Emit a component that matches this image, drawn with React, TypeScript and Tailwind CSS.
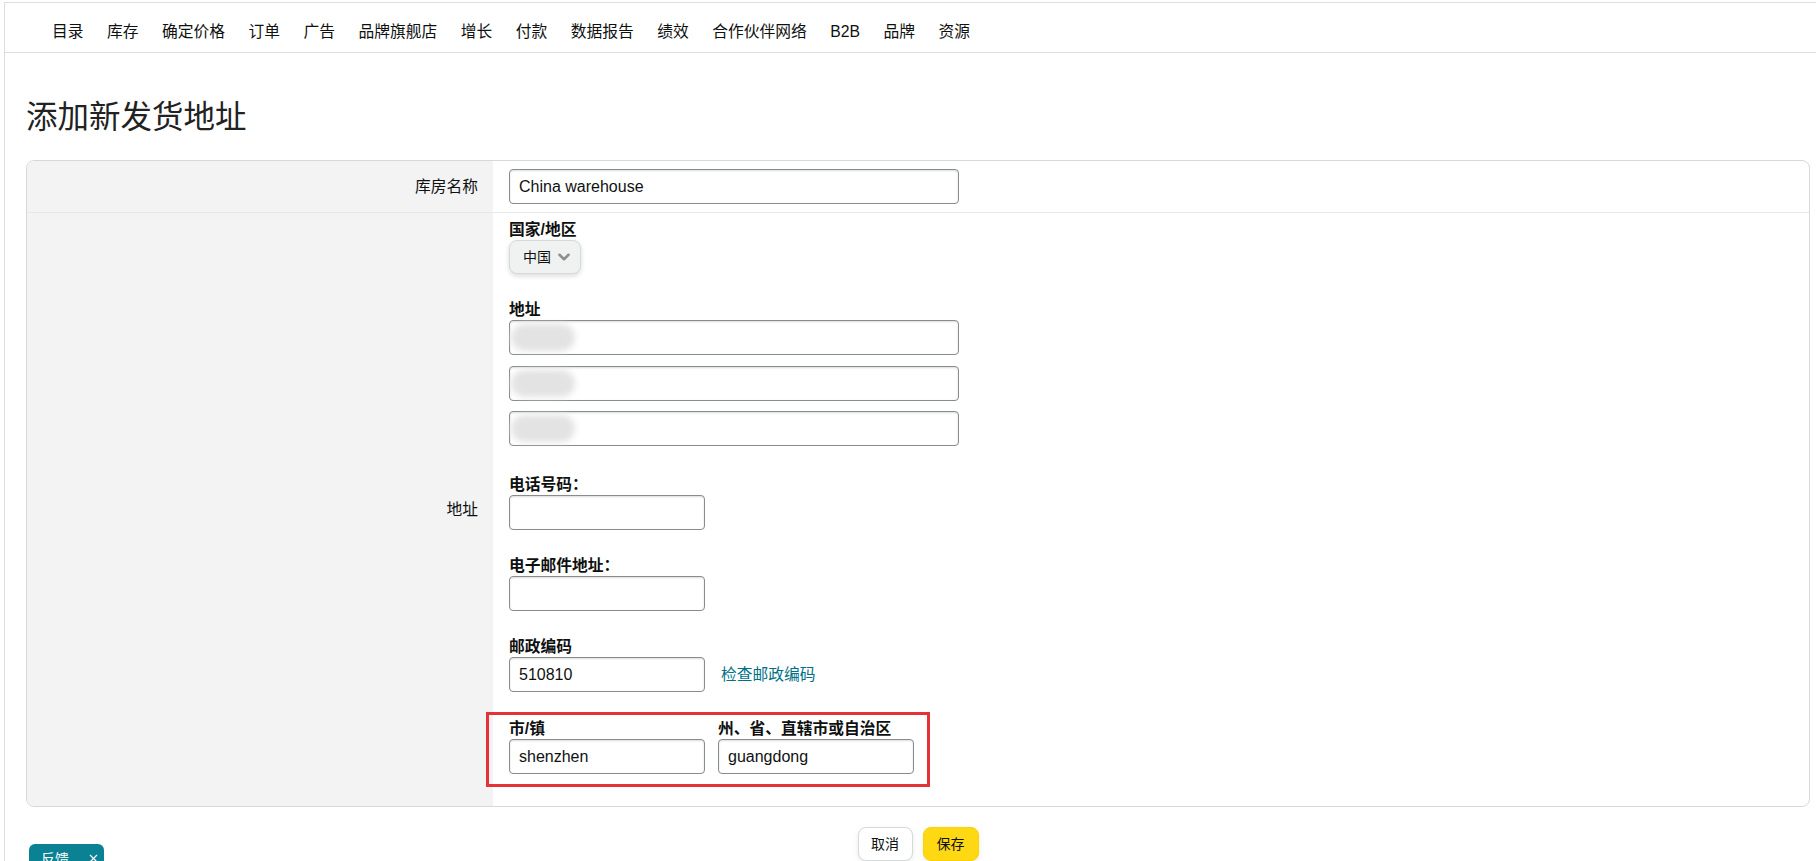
import { ChevronDown, X } from 'lucide-react';

const navItems = ['目录', '库存', '确定价格', '订单', '广告', '品牌旗舰店', '增长', '付款', '数据报告', '绩效', '合作伙伴网络', 'B2B', '品牌', '资源'];

const inputCls =
  'h-[35px] rounded-[4px] border border-[#888c8c] bg-white px-[9px] text-[16px] text-[#0f1111] shadow-[inset_0_1px_2px_rgba(15,17,17,0.15)] outline-none';

function Blur() {
  return (
    <span className="pointer-events-none absolute left-[2px] top-[4px] h-[27px] w-[64px] rounded-full bg-[#e3e3e3] blur-[3px]" />
  );
}

export default function App() {
  return (
    <div className="min-h-screen bg-white pl-[4px] pt-[2px] font-['Liberation_Sans','Noto_Sans_CJK_SC',sans-serif] text-[#0f1111]">
      <div className="min-h-[859px] border-l border-t border-[#dddddd]">
        {/* top nav */}
        <nav className="flex h-[50px] items-center gap-[23.5px] border-b border-[#dddddd] pl-[47px] pt-[8px] text-[15.75px]">
          {navItems.map((item) => (
            <a key={item} className="cursor-pointer whitespace-nowrap">
              {item}
            </a>
          ))}
        </nav>

        <div className="pl-[21px] pr-[6px]">
          <h1 className="mt-[44px] text-[31.5px] font-normal leading-[40px] text-[#222]">添加新发货地址</h1>

          <div className="mt-[23px] overflow-hidden rounded-[8px] border border-[#d5d9d9]">
            {/* warehouse name */}
            <div className="flex border-b border-[#e7e7e7]">
              <div className="flex w-[466px] items-center justify-end bg-[#f3f3f3] pr-[15px] text-[15.75px]">库房名称</div>
              <div className="flex-1 py-[8px] pl-[16px]">
                <input className={`${inputCls} w-[450px]`} defaultValue="China warehouse" />
              </div>
            </div>

            {/* address */}
            <div className="flex">
              <div className="flex w-[466px] items-center justify-end bg-[#f3f3f3] pr-[15px] text-[15.75px]">地址</div>
              <div className="flex-1 pb-[32px] pl-[16px] pt-[7px] text-[15.75px]">
                <div className="font-bold leading-[20px]">国家/地区</div>
                <button className="flex h-[34px] w-[72px] items-center gap-[4px] rounded-[8px] border border-[#d5d9d9] bg-[#f0f2f2] pl-[13px] text-[14px] shadow-[0_2px_5px_rgba(15,17,17,0.15)]">
                  中国
                  <ChevronDown className="h-[18px] w-[18px] text-[#8a8f8f]" strokeWidth={3.4} />
                </button>

                <div className="mt-[26px] font-bold leading-[20px]">地址</div>
                <div className="relative w-[450px]">
                  <input className={`${inputCls} w-[450px]`} />
                  <Blur />
                </div>
                <div className="relative mt-[11px] w-[450px]">
                  <input className={`${inputCls} w-[450px]`} />
                  <Blur />
                </div>
                <div className="relative mt-[10px] w-[450px]">
                  <input className={`${inputCls} w-[450px]`} />
                  <Blur />
                </div>

                <div className="mt-[29px] font-bold leading-[20px]">电话号码：</div>
                <input className={`${inputCls} block w-[196px]`} />

                <div className="mt-[26px] font-bold leading-[20px]">电子邮件地址：</div>
                <input className={`${inputCls} block w-[196px]`} />

                <div className="mt-[26px] font-bold leading-[20px]">邮政编码</div>
                <div className="flex items-center gap-[16px]">
                  <input className={`${inputCls} w-[196px]`} defaultValue="510810" />
                  <a className="cursor-pointer text-[15.75px] text-[#007185]">检查邮政编码</a>
                </div>

                <div className="relative mt-[27px] flex gap-[13px]">
                  <div>
                    <div className="font-bold leading-[20px]">市/镇</div>
                    <input className={`${inputCls} block w-[196px]`} defaultValue="shenzhen" />
                  </div>
                  <div>
                    <div className="font-bold leading-[20px]">州、省、直辖市或自治区</div>
                    <input className={`${inputCls} block w-[196px]`} defaultValue="guangdong" />
                  </div>
                  <div className="pointer-events-none absolute -bottom-[13px] -left-[23px] -top-[7px] w-[444px] border-[3px] border-[#e53238]" />
                </div>
              </div>
            </div>
          </div>

          {/* actions */}
          <div className="mt-[20px] flex justify-center gap-[10px]">
            <button className="h-[34px] w-[55px] rounded-[8px] border border-[#d5d9d9] bg-white text-[14px] shadow-[0_2px_5px_rgba(213,217,217,0.5)]">取消</button>
            <button className="h-[34px] w-[56px] rounded-[8px] border border-[#fcd200] bg-[#ffd814] text-[14px] shadow-[0_2px_5px_rgba(213,217,217,0.5)]">保存</button>
          </div>
        </div>
      </div>

      {/* feedback tab */}
      <div className="fixed left-[29px] top-[844px] flex h-[30px] w-[75px] items-start gap-[18px] rounded-t-[6px] bg-[#0b8294] pl-[12px] pt-[5px] text-[14px] text-white">
        反馈
        <X className="mt-[3px] h-[13px] w-[13px]" strokeWidth={2} />
      </div>
    </div>
  );
}
